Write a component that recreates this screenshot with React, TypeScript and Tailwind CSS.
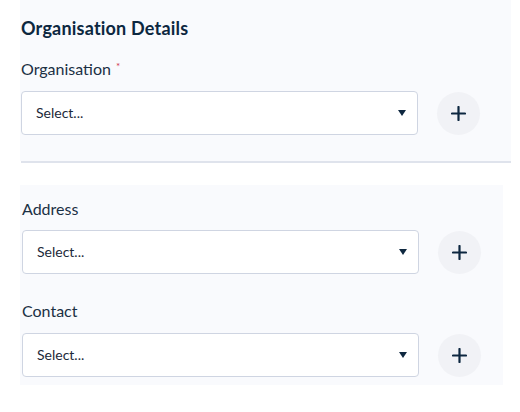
import React from "react";

const font = { fontFamily: "Lato, 'Noto Sans', sans-serif" };

function SelectRow() {
  return (
    <div className="flex items-center">
      <div className="flex h-[44px] w-[397px] items-center justify-between rounded-[4px] border border-[#cfd5e2] bg-white pl-[14px] pr-[11px]">
        <span className="text-[14px] leading-none text-[#1c2a3a]">Select...</span>
        <svg width="8" height="6" viewBox="0 0 8 6">
          <path d="M0 0 L8 0 L4 6 Z" fill="#0f2840" />
        </svg>
      </div>
      <button className="ml-[19px] flex h-[43px] w-[43px] items-center justify-center rounded-full bg-[#f1f2f6]">
        <svg width="15" height="15" viewBox="0 0 15 15">
          <path d="M7.5 1 V14 M1 7.5 H14" stroke="#0d2740" strokeWidth="2.2" strokeLinecap="round" />
        </svg>
      </button>
    </div>
  );
}

export default function App() {
  return (
    <div className="h-[412px] w-[520px] bg-white" style={font}>
      <div className="ml-[20px] w-[491px] bg-[#f9fafd] pb-[26px] pl-[1px] pt-[18px]">
        <h2 className="text-[18px] font-bold leading-[20px] tracking-[0.2px] text-[#0c2740]">Organisation Details</h2>
        <div className="mt-[21px] flex text-[16px] leading-[20px] text-[#1b3044]">
          Organisation<span className="ml-[5px] text-[10px] leading-[14px] text-[#d0344c]">*</span>
        </div>
        <div className="mt-[12px]">
          <SelectRow />
        </div>
      </div>
      <div className="ml-[21px] h-[2px] w-[490px] bg-[#dfe3ec]" />
      <div className="ml-[20px] mt-[22px] w-[483px] bg-[#f9fafd] pb-[8px] pl-[2px] pt-[14px]">
        <div className="text-[16px] leading-[20px] text-[#1b3044]">Address</div>
        <div className="mt-[11px]">
          <SelectRow />
        </div>
        <div className="mt-[27px] text-[16px] leading-[20px] text-[#1b3044]">Contact</div>
        <div className="mt-[12px]">
          <SelectRow />
        </div>
      </div>
    </div>
  );
}
